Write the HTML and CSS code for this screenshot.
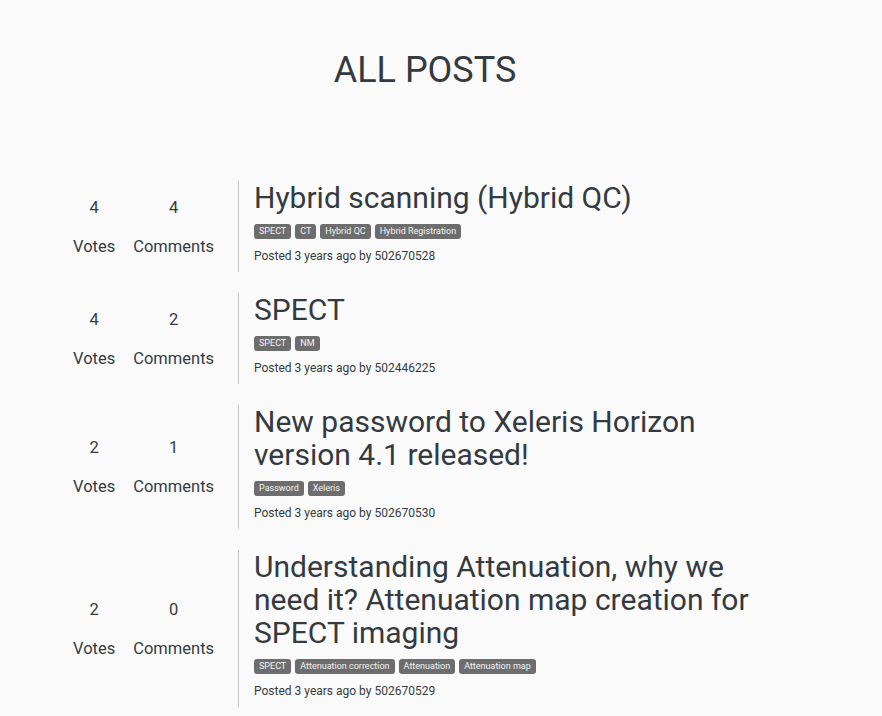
FILE: index.html
```html
<!DOCTYPE html>
<html lang="en">
<head>
<meta charset="utf-8">
<title>All Posts</title>
<link rel="stylesheet" href="styles.css">
</head>
<body>
<main class="page">
  <h1 class="page-title">ALL POSTS</h1>
  <div class="post-list">
    <article class="post">
      <div class="stats">
        <div class="stat stat-votes"><div class="num">4</div><div class="label">Votes</div></div>
        <div class="stat"><div class="num">4</div><div class="label">Comments</div></div>
      </div>
      <div class="body">
        <h3 class="title">Hybrid scanning (Hybrid QC)</h3>
        <div class="tags"><span class="tag">SPECT</span><span class="tag">CT</span><span class="tag">Hybrid QC</span><span class="tag">Hybrid Registration</span></div>
        <div class="meta">Posted 3 years ago by 502670528</div>
      </div>
    </article>
    <article class="post">
      <div class="stats">
        <div class="stat stat-votes"><div class="num">4</div><div class="label">Votes</div></div>
        <div class="stat"><div class="num">2</div><div class="label">Comments</div></div>
      </div>
      <div class="body">
        <h3 class="title">SPECT</h3>
        <div class="tags"><span class="tag">SPECT</span><span class="tag">NM</span></div>
        <div class="meta">Posted 3 years ago by 502446225</div>
      </div>
    </article>
    <article class="post">
      <div class="stats">
        <div class="stat stat-votes"><div class="num">2</div><div class="label">Votes</div></div>
        <div class="stat"><div class="num">1</div><div class="label">Comments</div></div>
      </div>
      <div class="body">
        <h3 class="title">New password to Xeleris Horizon version 4.1 released!</h3>
        <div class="tags"><span class="tag">Password</span><span class="tag">Xeleris</span></div>
        <div class="meta">Posted 3 years ago by 502670530</div>
      </div>
    </article>
    <article class="post">
      <div class="stats">
        <div class="stat stat-votes"><div class="num">2</div><div class="label">Votes</div></div>
        <div class="stat"><div class="num">0</div><div class="label">Comments</div></div>
      </div>
      <div class="body">
        <h3 class="title">Understanding Attenuation, why we need it? Attenuation map creation for SPECT imaging</h3>
        <div class="tags"><span class="tag">SPECT</span><span class="tag">Attenuation correction</span><span class="tag">Attenuation</span><span class="tag">Attenuation map</span></div>
        <div class="meta">Posted 3 years ago by 502670529</div>
      </div>
    </article>
  </div>
</main>
</body>
</html>
```

FILE: styles.css
```css
html, body {
  margin: 0;
  padding: 0;
  background: #fafafa;
}
body {
  font-family: Roboto, "Liberation Sans", Arial, sans-serif;
  color: #343a40;
}
.page {
  width: 730px;
  margin-left: 60px;
}
.page-title {
  margin: 49px 0 0;
  font-size: 36px;
  font-weight: 400;
  line-height: 43px;
  text-align: center;
}
.post-list {
  display: flex;
  flex-direction: column;
  gap: 21px;
  margin-top: 89px;
}
.post {
  display: flex;
}
.stats {
  width: 178px;
  flex: none;
  display: flex;
  align-items: center;
  gap: 18px;
  padding-left: 13px;
  padding-top: 1px;
  box-sizing: border-box;
}
.stat {
  display: flex;
  flex-direction: column;
  align-items: center;
  font-size: 16.5px;
  line-height: 24px;
}
.stat .label {
  margin-top: 15px;
}
.body {
  flex: 1;
  border-left: 1px solid #c8c8c8;
  padding: 0 0 7px 15px;
}
.title {
  margin: 0 0 10px;
  font-size: 30px;
  font-weight: 400;
  line-height: 33px;
}
.tags {
  display: flex;
  flex-wrap: wrap;
  gap: 4px;
  margin-bottom: 8px;
}
.tag {
  background: #6d6d6d;
  color: #f4f4f4;
  font-size: 9px;
  line-height: 9px;
  padding: 3px 5px;
  border-radius: 3px;
  font-weight: 400;
}
.meta {
  font-size: 12px;
  line-height: 18px;
}
```
